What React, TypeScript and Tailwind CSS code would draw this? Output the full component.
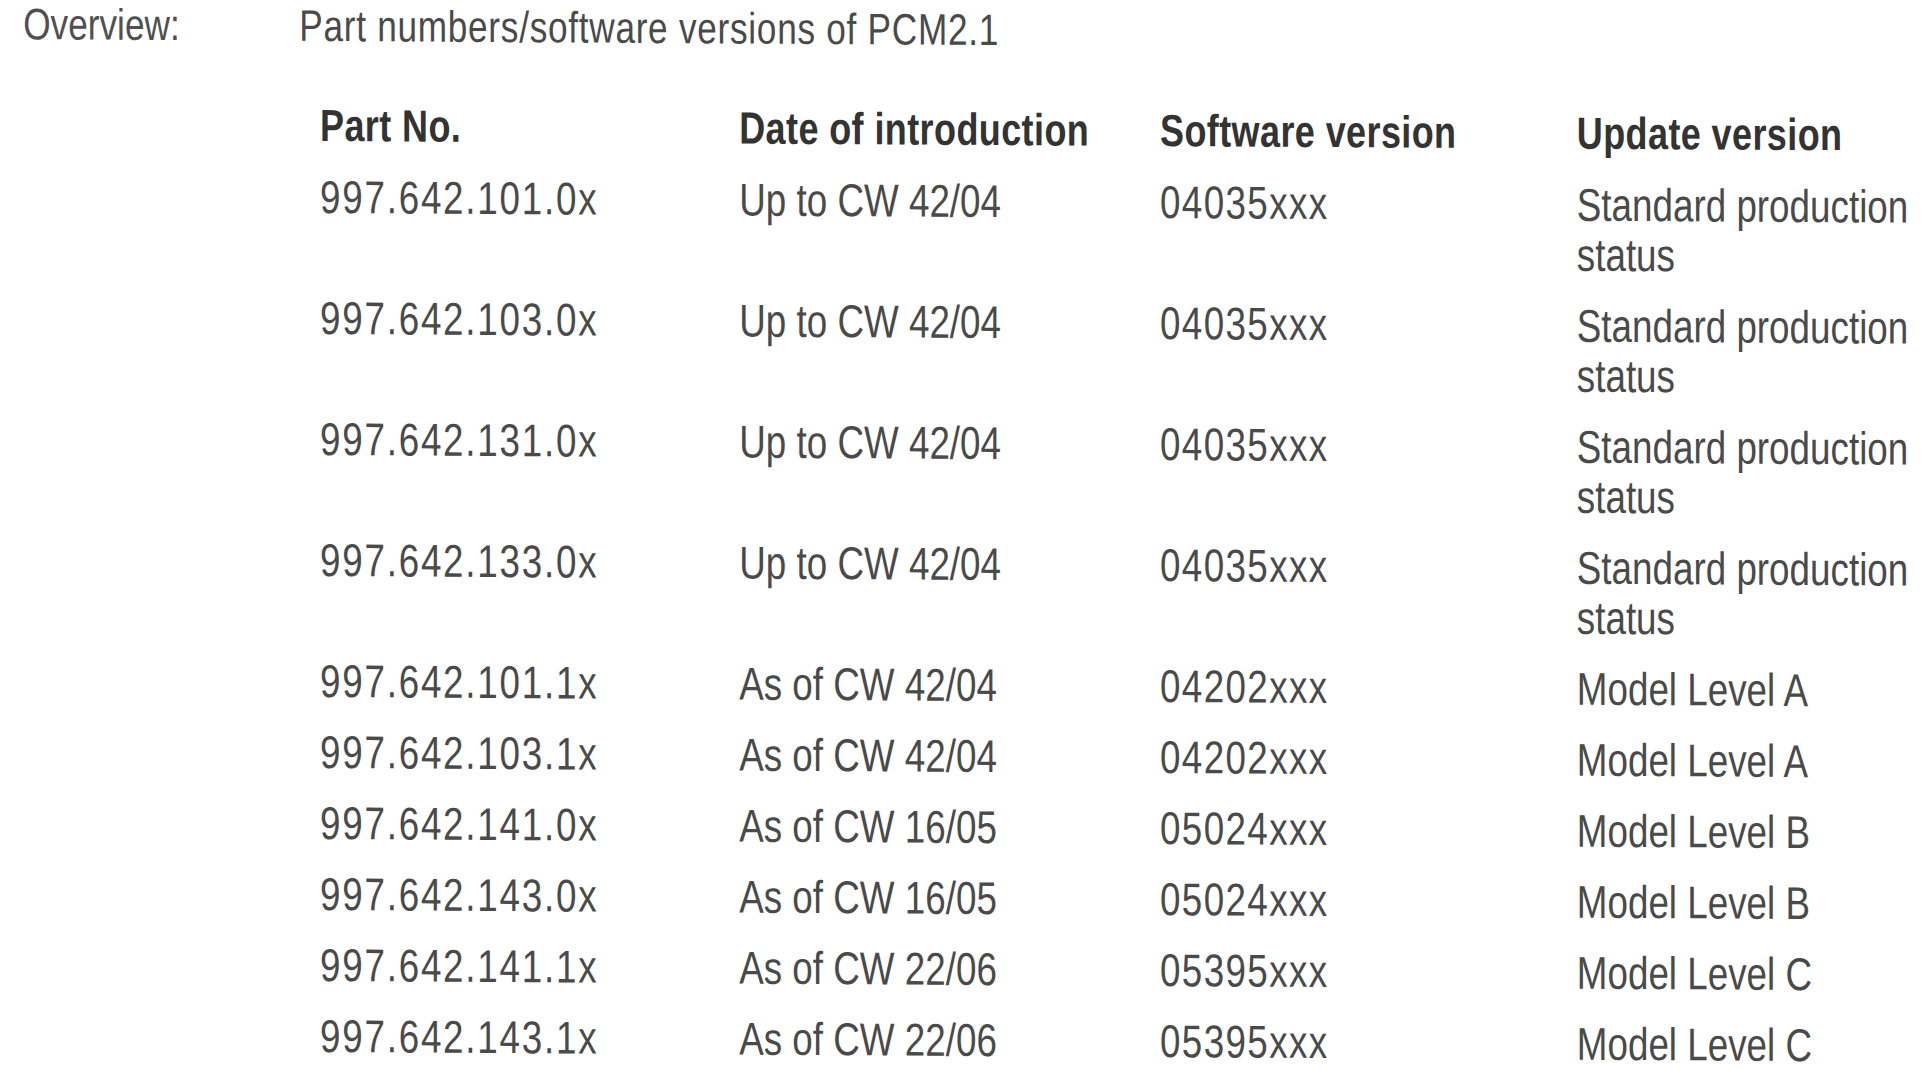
import React from "react";

interface PartRow {
  partNo: string;
  introduced: string;
  software: string;
  update: string;
}

const rows: PartRow[] = [
  { partNo: "997.642.101.0x", introduced: "Up to CW 42/04", software: "04035xxx", update: "Standard production status" },
  { partNo: "997.642.103.0x", introduced: "Up to CW 42/04", software: "04035xxx", update: "Standard production status" },
  { partNo: "997.642.131.0x", introduced: "Up to CW 42/04", software: "04035xxx", update: "Standard production status" },
  { partNo: "997.642.133.0x", introduced: "Up to CW 42/04", software: "04035xxx", update: "Standard production status" },
  { partNo: "997.642.101.1x", introduced: "As of CW 42/04", software: "04202xxx", update: "Model Level A" },
  { partNo: "997.642.103.1x", introduced: "As of CW 42/04", software: "04202xxx", update: "Model Level A" },
  { partNo: "997.642.141.0x", introduced: "As of CW 16/05", software: "05024xxx", update: "Model Level B" },
  { partNo: "997.642.143.0x", introduced: "As of CW 16/05", software: "05024xxx", update: "Model Level B" },
  { partNo: "997.642.141.1x", introduced: "As of CW 22/06", software: "05395xxx", update: "Model Level C" },
  { partNo: "997.642.143.1x", introduced: "As of CW 22/06", software: "05395xxx", update: "Model Level C" },
];

const headers = ["Part No.", "Date of introduction", "Software version", "Update version"];

const App: React.FC = () => {
  return (
    // Page: the scanned sheet uses a narrow face and sits slightly sheared
    <div className="w-[1928px] h-[1088px] overflow-hidden bg-white font-['Liberation_Sans',Arial,sans-serif]">
      <div className="w-[2410px] scale-x-[0.8] skew-y-[0.28deg] origin-top-left">
        {/* Title row */}
        <div className="flex pl-[29px] text-[44px] leading-[48px] text-[#505050]">
          <div className="w-[345px]">Overview:</div>
          <div className="tracking-[0.9px] text-[#4a4a4a]">
            Part numbers/software versions of PCM2.1
          </div>
        </div>

        {/* Table */}
        <div className="mt-[51px] pl-[400px] grid grid-cols-[524px_526px_521px_439px] gap-y-[21px]">
          {headers.map((h) => (
            <div
              key={h}
              className="text-[45px] leading-[50px] font-bold tracking-[0.5px] text-[#333333]"
            >
              {h}
            </div>
          ))}
          {rows.map((r) => (
            <React.Fragment key={r.partNo}>
              {/* Part No. */}
              <div className="text-[46px] leading-[50px] tracking-[2.2px] text-[#4a4a4a]">
                {r.partNo}
              </div>
              {/* Date of introduction */}
              <div className="text-[46px] leading-[50px] text-[#4a4a4a]">{r.introduced}</div>
              {/* Software version */}
              <div className="text-[46px] leading-[50px] tracking-[1.7px] text-[#4a4a4a]">
                {r.software}
              </div>
              {/* Update version */}
              <div className="text-[46px] leading-[50px] text-[#4a4a4a]">{r.update}</div>
            </React.Fragment>
          ))}
        </div>
      </div>
    </div>
  );
};

export default App;
